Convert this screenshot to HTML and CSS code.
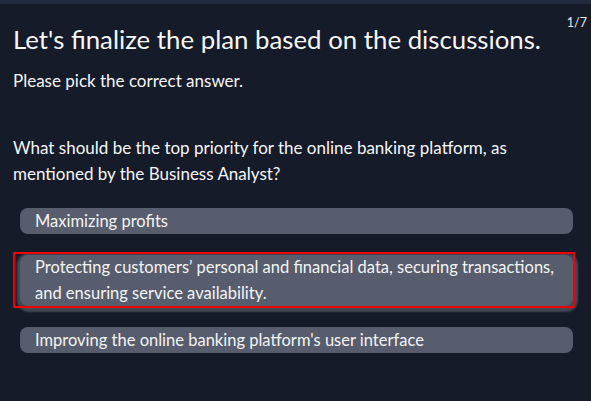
FILE: index.html
```html
<!DOCTYPE html>
<html lang="en">
<head>
<meta charset="utf-8">
<link rel="stylesheet" href="styles.css">
</head>
<body>
<div class="topbar"></div>
<main class="page">
  <div class="counter">1/7</div>
  <h1 class="title">Let's finalize the plan based on the discussions.</h1>
  <p class="subtitle">Please pick the correct answer.</p>
  <p class="question">What should be the top priority for the online banking platform, as mentioned by the Business Analyst?</p>
  <div class="options">
    <div class="option">Maximizing profits</div>
    <div class="option selected">Protecting customers’ personal and financial data, securing transactions, and ensuring service availability.</div>
    <div class="option">Improving the online banking platform's user interface</div>
  </div>
</main>
</body>
</html>
```

FILE: styles.css
```css
html, body {
  margin: 0;
  padding: 0;
  background: #161b2a;
  height: 100%;
}
body {
  font-family: Lato, "Open Sans", sans-serif;
  color: #f5f6f8;
  overflow: hidden;
}
.topbar {
  height: 4px;
  background: #222a3d;
}
.page {
  position: relative;
  padding: 19px 18px 0 13px;
}
.counter {
  position: absolute;
  top: 11px;
  right: 4px;
  font-size: 12.5px;
  color: #e8e9ec;
}
.title {
  margin: 0;
  font-size: 25.8px;
  font-weight: 400;
  line-height: 32px;
}
.subtitle {
  margin: 13px 0 0;
  font-size: 17px;
  line-height: 26px;
}
.question {
  margin: 41px 0 0;
  font-size: 17px;
  line-height: 26px;
}
.options {
  display: flex;
  flex-direction: column;
  gap: 21px;
  margin: 21px 0 0 7px;
}
.option {
  position: relative;
  background: #575d6c;
  border-radius: 8px;
  padding: 0 15px;
  font-size: 16.5px;
  line-height: 26px;
  color: #f3f4f6;
}
.option.selected {
  line-height: 25.5px;
  box-shadow: 1px 2px 2px 4px #434854;
}
.option.selected::after {
  content: "";
  position: absolute;
  top: -3px;
  right: -2px;
  bottom: -2px;
  left: -7px;
  border: 2px solid #f00000;
  pointer-events: none;
}
```
